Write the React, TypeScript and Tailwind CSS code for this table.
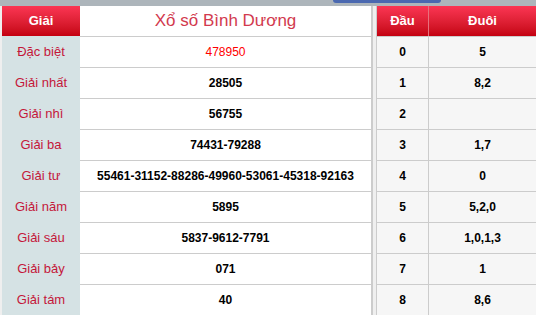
import React from "react";

const prizes: { name: string; value: string; special?: boolean }[] = [
  { name: "Đặc biệt", value: "478950", special: true },
  { name: "Giải nhất", value: "28505" },
  { name: "Giải nhì", value: "56755" },
  { name: "Giải ba", value: "74431-79288" },
  { name: "Giải tư", value: "55461-31152-88286-49960-53061-45318-92163" },
  { name: "Giải năm", value: "5895" },
  { name: "Giải sáu", value: "5837-9612-7791" },
  { name: "Giải bảy", value: "071" },
  { name: "Giải tám", value: "40" },
];

const loto: [string, string][] = [
  ["0", "5"],
  ["1", "8,2"],
  ["2", ""],
  ["3", "1,7"],
  ["4", "0"],
  ["5", "5,2,0"],
  ["6", "1,0,1,3"],
  ["7", "1"],
  ["8", "8,6"],
];

const redHead = "bg-gradient-to-b from-[#fb3553] to-[#c4000f] text-white font-bold text-[13px]";

export default function App() {
  return (
    <div className="w-[536px] h-[315px] overflow-hidden bg-[#efefef] font-['Liberation_Sans',Arial,sans-serif]">
      <div className="h-[6px] bg-[#adb5bb]">
        <div className="ml-[333px] w-[108px] h-[3px] rounded-b-[3px] bg-[#4a68b0]" />
      </div>
      <div className="flex pl-[2px]">
        {/* results table */}
        <div className="w-[371px] bg-white border-r-2 border-[#cccccc]">
          <div className="flex h-[30px]">
            <div className={`w-[78px] flex items-center justify-center ${redHead}`}>Giải</div>
            <div className="flex-1 flex items-center justify-center text-[17px] text-[#d23a4e]">
              Xổ số Bình Dương
            </div>
          </div>
          {prizes.map((p) => (
            <div key={p.name} className="flex h-[31px]">
              <div className="w-[78px] bg-[#d5e2e4] flex items-center justify-center text-[13px] text-[#c4173a]">
                {p.name}
              </div>
              <div
                className={`flex-1 border-t border-[#cccccc] flex items-center justify-center text-[12px] ${
                  p.special ? "text-[#ff0000]" : "font-bold text-black"
                }`}
              >
                {p.value}
              </div>
            </div>
          ))}
        </div>
        {/* loto table */}
        <div className="ml-[3px] flex-1 bg-[#f6f6f6] border-l border-[#cccccc]">
          <div className={`flex h-[30px] ${redHead}`}>
            <div className="w-[52px] flex items-center justify-center border-r border-[#e8707c]">Đầu</div>
            <div className="flex-1 flex items-center justify-center">Đuôi</div>
          </div>
          {loto.map(([d, t]) => (
            <div key={d} className="flex h-[31px] border-t border-[#cccccc] text-[12px] font-bold text-black">
              <div className="w-[52px] flex items-center justify-center border-r border-[#cccccc]">{d}</div>
              <div className="flex-1 flex items-center justify-center">{t}</div>
            </div>
          ))}
        </div>
      </div>
    </div>
  );
}
